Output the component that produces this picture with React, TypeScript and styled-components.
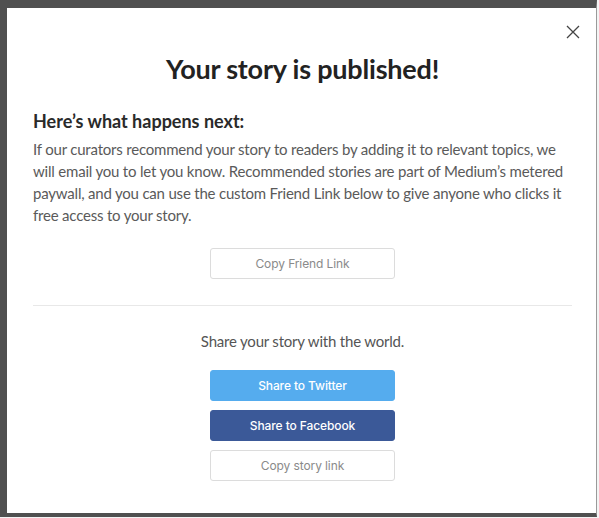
import React from "react";
import styled, { createGlobalStyle } from "styled-components";

const Global = createGlobalStyle`
  html, body { margin: 0; padding: 0; background: #f4f4f4; }
  body { width: 599px; height: 518px; overflow: hidden; }
`;

const Frame = styled.div`
  box-sizing: border-box;
  width: 597px;
  height: 517px;
  border-top: 8px solid #505050;
  border-left: 7px solid #505050;
  border-bottom: 4px solid #505050;
  border-right: 1px solid #9a9a9a;
  background: #fff;
  position: relative;
  display: flex;
  flex-direction: column;
  padding: 0 24px 0 26px;
  font-family: "Lato", "Open Sans", sans-serif;
`;

const Close = styled.button`
  position: absolute;
  top: 16px;
  right: 15px;
  width: 16px;
  height: 16px;
  padding: 0;
  border: 0;
  background: none;
  cursor: pointer;
  display: flex;
`;

const Title = styled.h1`
  margin: 44px 0 0;
  text-align: center;
  font-size: 27px;
  font-weight: 700;
  color: #222;
  line-height: 34px;
  letter-spacing: -0.2px;
`;

const Heading = styled.h2`
  margin: 23px 0 0;
  font-size: 18px;
  font-weight: 700;
  color: #2a2a2a;
  line-height: 24px;
`;

const Para = styled.p`
  margin: 5px 0 0;
  font-size: 15px;
  letter-spacing: -0.2px;
  line-height: 22px;
  color: #5a5a5a;
`;

const Center = styled.div<{ $mt: number }>`
  display: flex;
  flex-direction: column;
  align-items: center;
  gap: 9px;
  margin-top: ${(p) => p.$mt}px;
`;

const Btn = styled.button<{ $variant?: "outline" | "twitter" | "facebook" }>`
  box-sizing: border-box;
  width: 185px;
  height: 31px;
  border-radius: 3px;
  font-family: "Inter", "Roboto", sans-serif;
  font-size: 12px;
  letter-spacing: -0.1px;
  cursor: pointer;
  border: 1px solid
    ${(p) => (p.$variant === "twitter" ? "#55acee" : p.$variant === "facebook" ? "#3b5998" : "#dcdcdc")};
  background: ${(p) => (p.$variant === "twitter" ? "#55acee" : p.$variant === "facebook" ? "#3b5998" : "#fff")};
  color: ${(p) => (p.$variant ? "#fff" : "#8a8a8a")};
  font-weight: ${(p) => (p.$variant ? 500 : 400)};
`;

const Divider = styled.hr`
  margin: 26px 0 0;
  border: 0;
  border-top: 1px solid #e8e8e8;
`;

const Share = styled.p`
  margin: 25px 0 0;
  text-align: center;
  font-size: 15px;
  letter-spacing: -0.2px;
  color: #555;
  line-height: 20px;
`;

export default function App() {
  return (
    <>
      <Global />
      <Frame>
        <Close aria-label="Close">
          <svg width="16" height="16" viewBox="0 0 16 16">
            <path d="M2 2 L14 14 M14 2 L2 14" stroke="#444" strokeWidth="1.3" fill="none" />
          </svg>
        </Close>
        <Title>Your story is published!</Title>
        <Heading>Here’s what happens next:</Heading>
        <Para>
          If our curators recommend your story to readers by adding it to relevant topics, we will email you to let
          you know. Recommended stories are part of Medium’s metered paywall, and you can use the custom Friend Link
          below to give anyone who clicks it free access to your story.
        </Para>
        <Center $mt={22}>
          <Btn>Copy Friend Link</Btn>
        </Center>
        <Divider />
        <Share>Share your story with the world.</Share>
        <Center $mt={19}>
          <Btn $variant="twitter">Share to Twitter</Btn>
          <Btn $variant="facebook">Share to Facebook</Btn>
          <Btn>Copy story link</Btn>
        </Center>
      </Frame>
    </>
  );
}
